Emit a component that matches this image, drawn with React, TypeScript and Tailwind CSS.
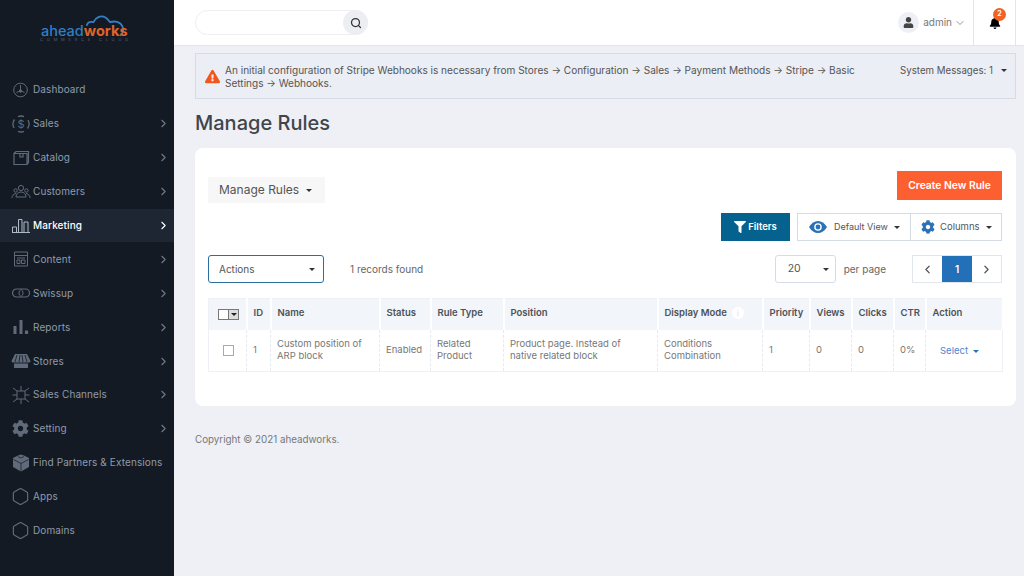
import React from "react";
import { ChevronRight, ChevronLeft, ChevronDown, Search, Hexagon } from "lucide-react";
import { FaCog, FaFilter, FaBell, FaUser, FaExclamationTriangle } from "react-icons/fa";

const ic = "w-[20px] h-[20px] text-[#5f6b7a]";
const S = ({ children }: { children: React.ReactNode }) => (
  <svg viewBox="0 0 20 20" className={ic} fill="none" stroke="currentColor" strokeWidth="1">{children}</svg>
);

const icons: Record<string, React.ReactNode> = {
  Dashboard: <S><circle cx="9.500" cy="10" r="6.800" /><path d="M9.500 5v5M5.500 12.500c2-1.500 6-1.500 8 0" /><circle cx="9.500" cy="11" r="1.200" fill="currentColor" /></S>,
  Sales: <S><path d="M3.500 5.500A8 8 0 0 0 3 14M16.500 14.500A8 8 0 0 0 17 6M7 2.600a8 8 0 0 1 6 0M7 17.400a8 8 0 0 0 6 0" strokeWidth="1.300" /><text x="10" y="14" textAnchor="middle" fontSize="11" fill="currentColor" stroke="none" fontFamily="Inter">$</text></S>,
  Catalog: <S><path d="M3 5.500h13v11H3zM3 5.500 5 3.500h12.500v11L16 16.500M9 5.500v3.500h3V5.500" strokeWidth="1.200" /></S>,
  Customers: <S><circle cx="10" cy="6" r="2.600" /><path d="M5 15c0-3 2-5 5-5s5 2 5 5zM1 16c0-2 1-4 4-4.500M19 16c0-2-1-4-4-4.500" /><circle cx="4.600" cy="8.500" r="1.700" /><circle cx="15.400" cy="8.500" r="1.700" /></S>,
  Marketing: <S><path d="M1.500 16.500V11h4v5.500M7.500 16.500V3.500h3.500v13M13 16.500V6h4v10.500M1 16.500h18" stroke="#aeb8c6" /></S>,
  Content: <S><path d="M3.500 3h13v14h-13zM3.500 6.500h13M6 9h8M6 11h3v3.500H6zM10.500 11H14v3.500h-3.500z" /></S>,
  Swissup: <S><rect x="1.500" y="6" width="17" height="8" rx="4" strokeWidth="1.200" /><path d="M10 6.500a4 4 0 0 0 0 7a4 4 0 0 0 0-7" /></S>,
  Reports: <S><path d="M4 9v8M10 3v14" strokeWidth="3" /><path d="M15.500 13.500V17" strokeWidth="3.200" /></S>,
  Stores: <svg viewBox="0 0 20 20" className={ic} fill="currentColor"><path d="M4 3h12l3.500 7c0 1-1 1.500-1.800 1.500H2.300c-.8 0-1.800-.5-1.800-1.500z" /><path d="M3 12.500h14V17H3z" /><path d="M6 4 4 11M9 4l-1 7M11 4l1 7M14 4l2 7" stroke="#141a23" strokeWidth=".8" /></svg>,
  "Sales Channels": <S><path d="M6 6h8v8H6zM10 1v5M10 14v5M1.500 10H6M14 10h4.500M2 3l4 3M18 3l-4 3M2 17l4-3M18 17l-4-3" /></S>,
  Setting: <FaCog className="w-[17px] h-[17px] text-[#5f6b7a]" />,
  "Find Partners & Extensions": <svg viewBox="0 0 20 20" className={ic} fill="currentColor"><path d="M10 1.500l3 1 5 2.500v9L10 18.500 2 14V5l5-2.500z" /><path d="M2.500 6.500 10 10.500l7.500-4M10 10.500v8M7 3.500l3 1.500 3-1.500" stroke="#141a23" strokeWidth=".7" fill="none" /></svg>,
  Apps: <Hexagon className="w-[19px] h-[19px] text-[#5f6b7a]" strokeWidth={1.500} />,
  Domains: <Hexagon className="w-[19px] h-[19px] text-[#5f6b7a]" strokeWidth={1.500} />,
};

const nav: [string, boolean][] = [
  ["Dashboard", false], ["Sales", true], ["Catalog", true], ["Customers", true], ["Marketing", true],
  ["Content", true], ["Swissup", true], ["Reports", true], ["Stores", true], ["Sales Channels", true],
  ["Setting", true], ["Find Partners & Extensions", false], ["Apps", false], ["Domains", false],
];

const Caret = ({ c = "border-t-[#333]" }: { c?: string }) => (
  <span className={`inline-block w-0 h-0 border-x-[3px] border-x-transparent border-t-[3.500px] ${c}`} />
);

const cols = [38, 24, 109, 51, 73, 154, 105, 47, 42, 42, 32, 77];
const heads = ["", "ID", "Name", "Status", "Rule Type", "Position", "Display Mode", "Priority", "Views", "Clicks", "CTR", "Action"];
const td = "border-r border-dashed border-[#e6e9ef] pl-[6px]";

export default function App() {
  return (
    <div className="flex w-[1024px] h-[576px] overflow-hidden bg-[#eef0f6] font-['Inter',sans-serif]">
      <aside className="w-[174px] shrink-0 bg-[#141a23] flex flex-col">
        <div className="h-[73px] shrink-0 flex flex-col items-center pt-[12px] pr-[2px]">
          <div className="relative h-[26px] w-[90px]">
            <svg viewBox="0 0 92 28" className="absolute inset-0 w-[90px] h-[26px]" fill="none">
              <path d="M47 14c1-3 4-4 7-3 2-5 8-8 13-5 3 2 4 4 5 5 5-2 11 0 13 4 2 4 1 8-2 10" stroke="#2f80c8" strokeWidth="2" strokeLinecap="round" />
            </svg>
            <div className="absolute left-0 top-[11px] text-[14.500px] leading-[16px] font-medium whitespace-nowrap">
              <span className="text-[#2f7fc4]">ahead</span><span className="text-[#e0632a] font-bold">works</span>
            </div>
          </div>
          <div className="text-[4px] leading-[5px] tracking-[3.800px] text-[#566070] whitespace-nowrap mt-[-1px]">COMMERCE CLOUD</div>
        </div>
        {nav.map(([n, ch]) => {
          const active = n === "Marketing";
          return (
            <div key={n} className={`h-[33.900px] shrink-0 flex items-center pl-[8px] pr-[4px] ${active ? "bg-[#1f2633]" : ""}`}>
              <span className="w-[25px] flex justify-center shrink-0">{icons[n]}</span>
              <span className={`text-[10px] tracking-[0.100px] whitespace-nowrap ${active ? "text-white font-medium" : "text-[#8f9bab]"}`}>{n}</span>
              {ch && <ChevronRight className={`ml-auto w-[13px] h-[13px] ${active ? "text-white" : "text-[#6f7b8b]"}`} />}
            </div>
          );
        })}
      </aside>

      <div className="flex-1 flex flex-col min-w-0">
        <header className="h-[46px] shrink-0 bg-white border-b border-[#e3e5ea] flex items-center pl-[21px]">
          <div className="w-[173px] h-[25px] rounded-full border border-[#eceef2] flex justify-end">
            <span className="w-[25px] h-[25px] -my-px -mr-px rounded-full bg-[#eceef2] flex items-center justify-center">
              <Search className="w-[12px] h-[12px] text-[#333]" strokeWidth={2.500} />
            </span>
          </div>
          <div className="ml-auto flex items-center h-full">
            <span className="w-[21px] h-[21px] rounded-full bg-[#eef0f6] flex items-center justify-center">
              <FaUser className="w-[11px] h-[11px] text-[#444]" />
            </span>
            <span className="ml-[4px] text-[10px] text-[#777]">admin</span>
            <ChevronDown className="ml-[2px] w-[12px] h-[12px] text-[#777]" strokeWidth={1.500} />
            <div className="ml-[7px] w-[43px] h-full border-x border-[#e3e5ea] flex items-center justify-center relative">
              <FaBell className="w-[12px] h-[12px] text-black" />
              <span className="absolute left-[19px] top-[8px] w-[13px] h-[13px] rounded-full bg-[#f26322] text-white text-[7px] font-bold flex items-center justify-center">2</span>
            </div>
            <div className="w-[8px]" />
          </div>
        </header>

        <main className="flex-1 pl-[21px] pr-[8px] pt-[7px]">
          <div className="h-[46px] border border-[#d6dce6] bg-[#ebeef4] flex items-start pl-[9px] pr-[8px] pt-[10px]">
            <FaExclamationTriangle className="w-[15px] h-[15px] mt-[5px] text-[#f0561d] shrink-0" />
            <p className="ml-[5px] w-[640px] text-[10.050px] leading-[13px] text-[#555]">
              An initial configuration of Stripe Webhooks is necessary from Stores → Configuration → Sales → Payment Methods → Stripe → Basic Settings → Webhooks.
            </p>
            <span className="ml-auto text-[9.700px] leading-[13px] text-[#555] whitespace-nowrap">System Messages: 1</span>
            <span className="ml-[8px] mt-[5px] flex"><Caret /></span>
          </div>

          <h1 className="mt-[10px] text-[20px] leading-[28px] font-medium text-[#41454b]">Manage Rules</h1>

          <section className="mt-[11px] h-[258px] bg-white rounded-[8px] pl-[13px] pr-[14px] pt-[23px]">
            <div className="flex items-start justify-between">
              <div className="mt-[6px] w-[117px] h-[26px] bg-[#f7f7f7] flex items-center pl-[11px] text-[12px] text-[#555]">
                Manage Rules<span className="ml-[7px] flex"><Caret /></span>
              </div>
              <button className="w-[105px] h-[29px] bg-[#fd6030] text-white text-[10.300px] font-semibold">Create New Rule</button>
            </div>

            <div className="mt-[10px] flex justify-end">
              <button className="w-[69px] h-[28px] bg-[#05628f] text-white text-[9.500px] font-semibold flex items-center justify-center gap-[2px]">
                <FaFilter className="w-[12px] h-[12px]" />Filters
              </button>
              <div className="ml-[7px] w-[114px] h-[28px] border border-[#d6dce6] flex items-center pl-[11px] text-[9px] text-[#555]">
                <svg viewBox="0 0 18 12" className="w-[18px] h-[12px] text-[#2a71b5]" fill="currentColor">
                  <path d="M0 6C2.500 2 5.500 0 9 0s6.500 2 9 6c-2.500 4-5.500 6-9 6S2.500 10 0 6z" />
                  <circle cx="9" cy="6" r="3.800" fill="white" />
                  <circle cx="9" cy="6" r="2.400" />
                </svg>
                <span className="ml-[7px]">Default View</span><span className="ml-[6px] flex"><Caret /></span>
              </div>
              <div className="-ml-px w-[92px] h-[28px] border border-[#d6dce6] flex items-center pl-[10px] text-[9.500px] text-[#555]">
                <FaCog className="w-[14px] h-[14px] text-[#2a71b5]" />
                <span className="ml-[5px]">Columns</span><span className="ml-[6px] flex"><Caret /></span>
              </div>
            </div>

            <div className="mt-[14px] flex items-center">
              <div className="w-[116px] h-[28px] rounded-[3px] border border-[#2a6f9e] flex items-center justify-between pl-[10px] pr-[8px] text-[10px] text-[#555]">
                Actions<Caret />
              </div>
              <span className="ml-[26px] text-[10px] text-[#666]">1 records found</span>
              <div className="ml-auto w-[61px] h-[28px] rounded-[3px] border border-[#d6dce6] flex items-center justify-between pl-[12px] pr-[6px] text-[10.500px] text-[#555]">
                20<Caret />
              </div>
              <span className="ml-[8px] text-[10px] text-[#666]">per page</span>
              <div className="ml-[26px] flex h-[28px] border border-[#e1e5ec]">
                <span className="w-[29px] flex items-center justify-center"><ChevronLeft className="w-[13px] h-[13px] text-[#555]" strokeWidth={2.200} /></span>
                <span className="w-[30px] bg-[#2270b8] text-white text-[10px] font-semibold flex items-center justify-center">1</span>
                <span className="w-[29px] flex items-center justify-center"><ChevronRight className="w-[13px] h-[13px] text-[#555]" strokeWidth={2.200} /></span>
              </div>
            </div>

            <table className="mt-[15px] w-[794px] table-fixed border-collapse border border-[#edf0f5]">
              <colgroup>{cols.map((w, i) => <col key={i} style={{ width: w }} />)}</colgroup>
              <thead>
                <tr className="h-[31px] bg-[#f2f5fa]">
                  {heads.map((h, i) => (
                    <th key={i} className={`border-r-2 border-white text-left text-[9.500px] font-semibold text-[#4d5259] whitespace-nowrap pb-[2px] ${i === 0 ? "pl-[9px]" : "pl-[6px]"}`}>
                      {i === 0 ? (
                        <div className="flex w-[21px] h-[11px] border border-[#777] bg-white mt-[2px]">
                          <span className="flex-1" />
                          <span className="w-[10px] bg-[#ddd] border-l border-[#777] flex items-center justify-center"><Caret c="border-t-[#222]" /></span>
                        </div>
                      ) : h === "Display Mode" ? (
                        <span className="flex items-center gap-[5px]">{h}<span className="w-[12px] h-[12px] rounded-full bg-white text-[#e3e8f0] text-[8px] flex items-center justify-center">i</span></span>
                      ) : h}
                    </th>
                  ))}
                </tr>
              </thead>
              <tbody>
                <tr className="h-[42px] text-[9.500px] leading-[12px] text-[#777]">
                  <td className="border-r border-dashed border-[#e6e9ef] pl-[14px]"><div className="w-[11px] h-[11px] border border-[#aaa]" /></td>
                  <td className={td}>1</td>
                  <td className={td}>Custom position of<br />ARP block</td>
                  <td className={td}>Enabled</td>
                  <td className={td}>Related<br />Product</td>
                  <td className={td}>Product page. Instead of<br />native related block</td>
                  <td className={td}>Conditions<br />Combination</td>
                  <td className={td}>1</td>
                  <td className={td}>0</td>
                  <td className={td}>0</td>
                  <td className={td}>0%</td>
                  <td className="pl-[14px]"><span className="flex items-center gap-[5px] text-[#4d86d6] mt-[2px]">Select<Caret c="border-t-[#2a71b5]" /></span></td>
                </tr>
              </tbody>
            </table>
          </section>

          <p className="mt-[27px] text-[9.800px] text-[#777]">Copyright © 2021 aheadworks.</p>
        </main>
      </div>
    </div>
  );
}
